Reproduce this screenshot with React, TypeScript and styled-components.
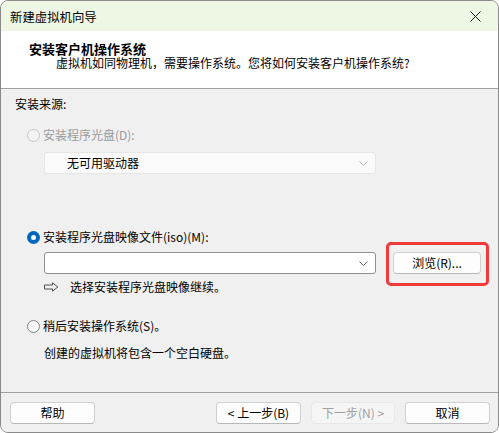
import React from "react";
import styled, { createGlobalStyle, css } from "styled-components";

const Global = createGlobalStyle`
  html, body { margin: 0; padding: 0; background: #ffffff; }
  body { font-family: "Microsoft YaHei UI", "Noto Sans CJK SC", "Noto Sans", sans-serif; font-size: 12px; color: #000; }
  * { box-sizing: border-box; }
`;

const Window = styled.div`
  width: 499px;
  height: 433px;
  border: 1px solid #8a8a8a;
  border-radius: 8px;
  overflow: hidden;
  display: flex;
  flex-direction: column;
  background: #f0f0f0;
`;

const TitleBar = styled.div`
  height: 30px;
  flex: none;
  background: #eef6e4;
  display: flex;
  align-items: center;
  justify-content: space-between;
  padding: 0 9px 0 9px;
`;

const TitleText = styled.span`
  font-size: 12.4px;
  line-height: 16px;
  margin-top: 1px;
`;

const CloseButton = styled.div`
  width: 16px;
  height: 16px;
  display: flex;
  align-items: center;
  justify-content: center;
  margin-right: 6px;
  margin-top: 1px;
`;

const Header = styled.div`
  height: 58px;
  flex: none;
  background: #ffffff;
  border-bottom: 1px solid #a0a0a0;
  display: flex;
  flex-direction: column;
  padding: 11px 0 0 28px;
`;

const HeaderTitle = styled.div`
  font-size: 13px;
  font-weight: bold;
  line-height: 14px;
`;

const HeaderSub = styled.div`
  font-size: 12px;
  line-height: 14px;
  margin: 0 0 0 27px;
`;

const Body = styled.div`
  flex: 1;
  display: flex;
  flex-direction: column;
  padding: 7px 0 0 14px;
  background: #f0f0f0;
`;

const SectionLabel = styled.div`
  line-height: 16px;
`;

const RadioRow = styled.label<{ $mt: number; $disabled?: boolean }>`
  display: flex;
  align-items: center;
  height: 18px;
  margin: ${(p) => p.$mt}px 0 0 12px;
  gap: 3px;
  color: ${(p) => (p.$disabled ? "#9a9a9a" : "#000")};
  line-height: 16px;
`;

const RadioCircle = styled.span<{ $checked?: boolean; $disabled?: boolean }>`
  width: 13px;
  height: 13px;
  border-radius: 50%;
  flex: none;
  ${(p) =>
    p.$checked
      ? css`
          background: #0067c0;
          display: flex;
          align-items: center;
          justify-content: center;
          &::after {
            content: "";
            width: 5px;
            height: 5px;
            border-radius: 50%;
            background: #fff;
          }
        `
      : css`
          border: 1px solid ${p.$disabled ? "#c6c6c6" : "#858585"};
          background: ${p.$disabled ? "#f3f3f3" : "#f7f7f7"};
        `}
`;

const Select = styled.div<{ $disabled?: boolean; $mt: number }>`
  width: 332px;
  height: 22px;
  margin: ${(p) => p.$mt}px 0 0 29px;
  display: flex;
  align-items: center;
  justify-content: space-between;
  padding: 0 7px 0 ${(p) => (p.$disabled ? 22 : 6)}px;
  border-radius: 3px;
  background: ${(p) => (p.$disabled ? "#fafafa" : "#ffffff")};
  border: 1px solid ${(p) => (p.$disabled ? "#e6e6e6" : "#8f8f8f")};
  flex: none;
  line-height: 16px;
`;

const FileRow = styled.div`
  display: flex;
  align-items: center;
  margin-top: 6px;
  height: 22px;
`;

const Highlight = styled.div`
  position: relative;
  margin-left: 17px;
  &::after {
    content: "";
    position: absolute;
    left: -7px;
    top: -10px;
    right: -8px;
    bottom: -12px;
    border: 3px solid #f23a3a;
    border-radius: 5px;
    pointer-events: none;
  }
`;

const Button = styled.button<{ $w: number; $disabled?: boolean }>`
  width: ${(p) => p.$w}px;
  height: 22px;
  font-family: inherit;
  font-size: 12px;
  line-height: 16px;
  padding: 0;
  border-radius: 4px;
  background: ${(p) => (p.$disabled ? "#f5f5f5" : "#fdfdfd")};
  border: 1px solid ${(p) => (p.$disabled ? "#e8e8e8" : "#d0d0d0")};
  border-bottom-color: ${(p) => (p.$disabled ? "#e8e8e8" : "#b8b8b8")};
  color: ${(p) => (p.$disabled ? "#a0a0a0" : "#000")};
  flex: none;
`;

const HintRow = styled.div`
  display: flex;
  align-items: center;
  height: 16px;
  margin: 5px 0 0 29px;
  line-height: 16px;
`;

const HintArrow = styled.span`
  width: 26px;
  display: flex;
  align-items: center;
  flex: none;
`;

const Note = styled.div`
  line-height: 16px;
  margin: 10px 0 0 29px;
`;

const Footer = styled.div`
  height: 40px;
  flex: none;
  border-top: 1px solid #a0a0a0;
  display: flex;
  align-items: flex-start;
  padding: 9px 0 0 9px;
  background: #f0f0f0;
`;

const Spacer = styled.div`
  flex: 1;
`;

const FooterGroup = styled.div`
  display: flex;
  gap: 10px;
  margin-right: 8px;
`;

const Chevron = ({ color }: { color: string }) => (
  <svg width="9" height="5" viewBox="0 0 9 5">
    <path d="M0.5 0.5 L4.5 4.5 L8.5 0.5" fill="none" stroke={color} strokeWidth="1" />
  </svg>
);

export default function App() {
  return (
    <>
      <Global />
      <Window>
        <TitleBar>
          <TitleText>新建虚拟机向导</TitleText>
          <CloseButton>
            <svg width="11" height="11" viewBox="0 0 11 11">
              <path d="M0.5 0.5 L10.5 10.5 M10.5 0.5 L0.5 10.5" stroke="#1a1a1a" strokeWidth="1" />
            </svg>
          </CloseButton>
        </TitleBar>
        <Header>
          <HeaderTitle>安装客户机操作系统</HeaderTitle>
          <HeaderSub>虚拟机如同物理机，需要操作系统。您将如何安装客户机操作系统?</HeaderSub>
        </Header>
        <Body>
          <SectionLabel>安装来源:</SectionLabel>
          <RadioRow $mt={14} $disabled>
            <RadioCircle $disabled />
            安装程序光盘(D):
          </RadioRow>
          <Select $disabled $mt={8}>
            <span>无可用驱动器</span>
            <Chevron color="#b5b5b5" />
          </Select>
          <RadioRow $mt={54}>
            <RadioCircle $checked />
            安装程序光盘映像文件(iso)(M):
          </RadioRow>
          <FileRow>
            <Select $mt={0}>
              <span />
              <Chevron color="#606060" />
            </Select>
            <Highlight>
              <Button $w={88}>浏览(R)...</Button>
            </Highlight>
          </FileRow>
          <HintRow>
            <HintArrow>
              <svg width="15" height="10" viewBox="0 0 15 10">
                <path d="M0.5 3 H8.5 V0.8 L13.8 5 L8.5 9.2 V7 H0.5 Z" fill="none" stroke="#505050" strokeWidth="1" />
              </svg>
            </HintArrow>
            选择安装程序光盘映像继续。
          </HintRow>
          <RadioRow $mt={22}>
            <RadioCircle />
            稍后安装操作系统(S)。
          </RadioRow>
          <Note>创建的虚拟机将包含一个空白硬盘。</Note>
        </Body>
        <Footer>
          <Button $w={85}>帮助</Button>
          <Spacer />
          <FooterGroup>
            <Button $w={85}>&lt; 上一步(B)</Button>
            <Button $w={84} $disabled>下一步(N) &gt;</Button>
            <Button $w={85}>取消</Button>
          </FooterGroup>
        </Footer>
      </Window>
    </>
  );
}
